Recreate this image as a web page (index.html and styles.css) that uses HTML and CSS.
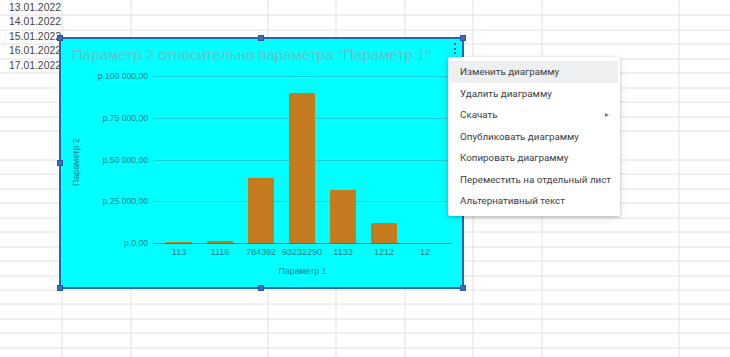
FILE: index.html
```html
<!DOCTYPE html>
<html lang="ru">
<head>
<meta charset="utf-8">
<title>Диаграмма</title>
<link rel="stylesheet" href="styles.css">
</head>
<body>
<div class="sheet">
  <div class="rows">
    <div class="row"><span class="date">13.01.2022</span></div>
    <div class="row"><span class="date">14.01.2022</span></div>
    <div class="row"><span class="date">15.01.2022</span></div>
    <div class="row"><span class="date">16.01.2022</span></div>
    <div class="row"><span class="date">17.01.2022</span></div>
  </div>

  <div class="chart">
    <div class="handle h-tl"></div>
    <div class="handle h-tm"></div>
    <div class="handle h-tr"></div>
    <div class="handle h-ml"></div>
    <div class="handle h-mr"></div>
    <div class="handle h-bl"></div>
    <div class="handle h-bm"></div>
    <div class="handle h-br"></div>
    <div class="kebab"><i></i><i></i><i></i></div>

    <div class="chart-title">Параметр 2 относительно параметра "Параметр 1"</div>
    <div class="chart-body">
      <div class="y-title"><span>Параметр 2</span></div>
      <div class="y-labels">
        <span>р.100 000,00</span>
        <span>р.75 000,00</span>
        <span>р.50 000,00</span>
        <span>р.25 000,00</span>
        <span>р.0,00</span>
      </div>
      <div class="plot-wrap">
        <div class="plot">
          <div class="gl"></div>
          <div class="gl"></div>
          <div class="gl"></div>
          <div class="gl"></div>
          <div class="bars">
            <div class="col"><div class="bar" style="height:1px"></div></div>
            <div class="col"><div class="bar" style="height:2px"></div></div>
            <div class="col"><div class="bar" style="height:65px"></div></div>
            <div class="col"><div class="bar" style="height:150px"></div></div>
            <div class="col"><div class="bar" style="height:53px"></div></div>
            <div class="col"><div class="bar" style="height:20px"></div></div>
            <div class="col"><div class="bar" style="height:0px"></div></div>
          </div>
        </div>
        <div class="baseline"></div>
        <div class="x-labels">
          <span>113</span>
          <span>1116</span>
          <span>784392</span>
          <span>93232290</span>
          <span>1133</span>
          <span>1212</span>
          <span>12</span>
        </div>
        <div class="x-title">Параметр 1</div>
      </div>
    </div>
  </div>

  <div class="menu">
    <div class="item active">Изменить диаграмму</div>
    <div class="item">Удалить диаграмму</div>
    <div class="item">Скачать<span class="arrow"></span></div>
    <div class="item">Опубликовать диаграмму</div>
    <div class="item">Копировать диаграмму</div>
    <div class="item">Переместить на отдельный лист</div>
    <div class="item">Альтернативный текст</div>
  </div>
</div>
</body>
</html>
```

FILE: styles.css
```css
html, body {
  margin: 0;
  padding: 0;
  background: #fff;
  overflow: hidden;
}

.sheet {
  position: relative;
  width: 730px;
  height: 357px;
  overflow: hidden;
  background-color: #fff;
  background-image:
    repeating-linear-gradient(to right, transparent 0 67.5px, #e1e1e1 67.5px 68.5px),
    repeating-linear-gradient(to bottom, transparent 0 13.45px, #e1e1e1 13.45px 14.45px);
  background-position: -5.5px 0, 0 1.55px;
  font-family: "Liberation Sans", Arial, sans-serif;
}

.rows {
  padding-top: 0.55px;
}

.row {
  height: 14.45px;
  display: flex;
  align-items: center;
}

.date {
  width: 62px;
  box-sizing: border-box;
  padding-right: 1px;
  text-align: right;
  font-size: 10.4px;
  line-height: 12px;
  color: #444;
}

/* ---------- chart ---------- */
.chart {
  position: absolute;
  left: 59px;
  top: 37px;
  width: 405px;
  height: 252px;
  box-sizing: border-box;
  border: 2px solid #2367ad;
  background: #00ffff;
  padding-top: 8px;
  font-family: "Liberation Sans", Arial, sans-serif;
}

.handle {
  position: absolute;
  width: 6px;
  height: 6px;
  box-sizing: border-box;
  background: #3a6cc0;
  border: 1px solid #2b55a0;
  z-index: 2;
}
.h-tl { left: -4px; top: -4px; }
.h-tm { left: 197px; top: -4px; }
.h-tr { left: 399px; top: -4px; }
.h-ml { left: -4px; top: 121px; }
.h-mr { left: 399px; top: 121px; }
.h-bl { left: -4px; top: 246px; }
.h-bm { left: 197px; top: 246px; }
.h-br { left: 399px; top: 246px; }

.kebab {
  position: absolute;
  left: 393px;
  top: 4px;
  display: flex;
  flex-direction: column;
  gap: 2.5px;
}
.kebab i {
  display: block;
  width: 2px;
  height: 2px;
  background: #3f5f63;
}

.chart-title {
  margin-left: 11px;
  font-size: 15.1px;
  line-height: 16px;
  color: #66c2c6;
  white-space: nowrap;
}

.chart-body {
  margin-top: 13px;
  display: flex;
  align-items: flex-start;
}

.y-title {
  width: 29px;
  height: 167px;
  padding-top: 5px;
  box-sizing: border-box;
  display: flex;
  align-items: center;
  justify-content: center;
}
.y-title span {
  writing-mode: vertical-rl;
  transform: rotate(180deg);
  font-size: 8.8px;
  color: #1f7f88;
  white-space: nowrap;
}

.y-labels {
  width: 58px;
  height: 167px;
  display: flex;
  flex-direction: column;
  justify-content: space-between;
  align-items: flex-end;
}
.y-labels span {
  height: 0;
  display: flex;
  align-items: center;
  font-size: 8.6px;
  color: #1f7f88;
  white-space: nowrap;
}

.plot-wrap {
  margin-left: 5px;
  width: 299px;
}

.plot {
  position: relative;
  width: 294px;
  height: 167px;
}

.gl {
  height: 41.75px;
  box-sizing: border-box;
  border-top: 1px solid #19cfd6;
}

.bars {
  position: absolute;
  left: 0;
  right: 0;
  top: 0;
  bottom: 0;
  padding-left: 5.5px;
  display: flex;
  align-items: flex-end;
}
.col {
  width: 41px;
  display: flex;
  justify-content: center;
}
.bar {
  width: 26px;
  background: #c47b1d;
}

.baseline {
  height: 1px;
  width: 299px;
  background: #21878e;
}

.x-labels {
  margin-top: 2px;
  padding-left: 5.5px;
  display: flex;
}
.x-labels span {
  width: 41px;
  text-align: center;
  font-size: 9px;
  line-height: 12px;
  color: #1f7f88;
  white-space: nowrap;
}

.x-title {
  margin-top: 7px;
  text-align: center;
  font-size: 8.8px;
  line-height: 12px;
  color: #1f7f88;
}

/* ---------- context menu ---------- */
.menu {
  position: absolute;
  left: 448px;
  top: 57px;
  width: 172px;
  box-sizing: border-box;
  padding: 4px 0;
  background: #fff;
  border-radius: 2px;
  box-shadow: 0 1px 3px rgba(0,0,0,0.2), 0 2px 8px rgba(0,0,0,0.12);
  font-family: Roboto, "Liberation Sans", Arial, sans-serif;
  z-index: 5;
}

.item {
  height: 21.5px;
  display: flex;
  align-items: center;
  padding-left: 12px;
  font-size: 9.8px;
  color: #3c4043;
  white-space: nowrap;
}
.item.active {
  background: #eeeff1;
  margin-right: 2px;
}

.arrow {
  margin-left: auto;
  margin-right: 11px;
  width: 0;
  height: 0;
  border-left: 4px solid #777;
  border-top: 2.5px solid transparent;
  border-bottom: 2.5px solid transparent;
}
```
